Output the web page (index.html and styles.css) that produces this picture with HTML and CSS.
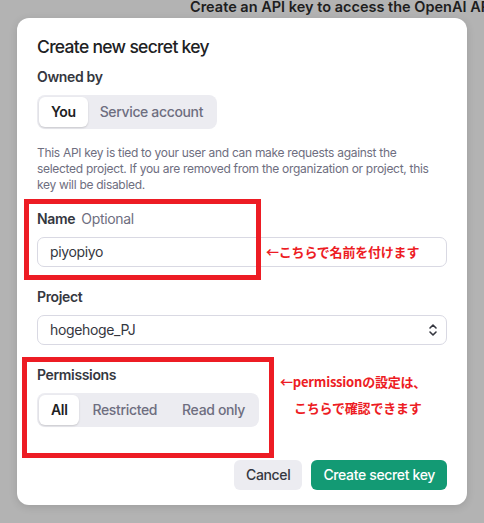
FILE: index.html
```html
<!DOCTYPE html>
<html lang="ja">
<head>
    <meta charset="UTF-8">
    <meta name="viewport" content="width=device-width, initial-scale=1.0">
    <title>Create new secret key</title>
    <link rel="stylesheet" href="styles.css">
</head>
<body>
    <div class="pageTitle">Create an API key to access the OpenAI API</div>

    <div class="dialog">
        <h2 class="dialogTitle">Create new secret key</h2>

        <div class="label">Owned by</div>
        <div class="segmented">
            <a class="active">You</a>
            <a>Service account</a>
        </div>

        <p class="note">This API key is tied to your user and can make requests against the<br>selected project. If you are removed from the organization or project, this<br>key will be disabled.</p>

        <div class="label">Name <span class="optional">Optional</span></div>
        <div class="field">piyopiyo</div>

        <div class="label">Project</div>
        <div class="field select">
            <span>hogehoge_PJ</span>
            <svg width="10" height="14" viewBox="0 0 10 14">
                <path d="M2 5 L5 2 L8 5 M2 9 L5 12 L8 9" fill="none" stroke="#353740" stroke-width="1.6" stroke-linecap="round" stroke-linejoin="round"/>
            </svg>
        </div>

        <div class="label">Permissions</div>
        <div class="segmented">
            <a class="active">All</a>
            <a class="wide">Restricted</a>
            <a>Read only</a>
        </div>

        <div class="actions">
            <a class="btn cancel">Cancel</a>
            <a class="btn primary">Create secret key</a>
        </div>
    </div>

    <!-- 注釈 -->
    <div class="mark markName"></div>
    <div class="mark markPerm"></div>
    <div class="memo memoName">←こちらで名前を付けます</div>
    <div class="memo memoPerm">←permissionの設定は、<br><span class="indent">こちらで確認できます</span></div>
</body>
</html>
```

FILE: styles.css
```css
* {
    margin: 0;
    padding: 0;
    box-sizing: border-box;
}

body {
    position: relative;
    width: 484px;
    height: 523px;
    overflow: hidden;
    background: #b3b3b3;
    font-family: Inter, "Noto Sans", sans-serif;
    color: #202123;
}

body a {
    text-decoration: none;
    cursor: pointer;
}

.pageTitle {
    margin-top: -2px;
    padding-left: 190px;
    height: 18px;
    line-height: 18px;
    font-size: 14.5px;
    font-weight: 600;
    letter-spacing: 0;
    color: #1e1e1e;
    white-space: nowrap;
}

.dialog {
    width: 450px;
    height: 487px;
    margin: 2px 0 0 17px;
    padding: 17px 20px 15px;
    background: #ffffff;
    border-radius: 12px;
    box-shadow: 0 2px 8px rgba(0, 0, 0, 0.12);
    display: flex;
    flex-direction: column;
    letter-spacing: -0.35px;
}

.dialogTitle {
    font-size: 17.5px;
    line-height: 24px;
    font-weight: 500;
    letter-spacing: -0.7px;
    margin-bottom: 8px;
}

.label {
    font-size: 14px;
    line-height: 20px;
    font-weight: 600;
    color: #353740;
    margin-bottom: 8px;
}
.optional {
    font-weight: 400;
    color: #6e6e80;
    margin-left: 3px;
}

.segmented {
    align-self: flex-start;
    display: flex;
    padding: 2px;
    height: 34px;
    background: #ececf1;
    border-radius: 8px;
}
.segmented a {
    padding: 0 12px;
    line-height: 30px;
    font-size: 14px;
    font-weight: 500;
    color: #6e6e80;
    border-radius: 6px;
}
.segmented a.wide {
    padding: 0 13px;
}
.segmented a.active {
    background: #ffffff;
    color: #202123;
    font-weight: 600;
    box-shadow: 0 1px 2px rgba(0, 0, 0, 0.15);
}

.note {
    margin: 16px 0 16px;
    font-size: 12px;
    line-height: 16px;
    letter-spacing: -0.3px;
    color: #6e6e80;
    white-space: nowrap;
}

.field {
    height: 30px;
    border: 1px solid #d9d9e3;
    border-radius: 7px;
    padding: 0 12px;
    font-size: 14px;
    line-height: 28px;
    color: #353740;
    margin-bottom: 20px;
}
.select {
    display: flex;
    justify-content: space-between;
    align-items: center;
    padding-right: 8px;
}

.actions {
    margin-top: auto;
    display: flex;
    justify-content: flex-end;
    gap: 9px;
}
.btn {
    height: 30px;
    line-height: 30px;
    padding: 0 12px;
    border-radius: 6px;
    font-size: 14px;
    font-weight: 500;
}
.cancel {
    background: #ececf1;
    color: #353740;
}
.primary {
    background: #139a74;
    color: #ffffff;
}

/* 注釈 */
.mark {
    position: absolute;
    border: 5px solid #ed1c24;
}
.markName {
    left: 24px;
    top: 199px;
    width: 237px;
    height: 81px;
}
.markPerm {
    left: 22px;
    top: 357px;
    width: 252px;
    height: 101px;
}

.memo {
    position: absolute;
    font-family: "Noto Sans CJK JP", sans-serif;
    font-size: 13px;
    font-weight: 700;
    letter-spacing: -0.2px;
    color: #ed1c24;
    white-space: nowrap;
}
.memoName {
    left: 266px;
    top: 242px;
    line-height: 20px;
    background: #ffffff;
}
.memoPerm {
    left: 280px;
    top: 369px;
    line-height: 26px;
}
.indent {
    padding-left: 14px;
}
```
